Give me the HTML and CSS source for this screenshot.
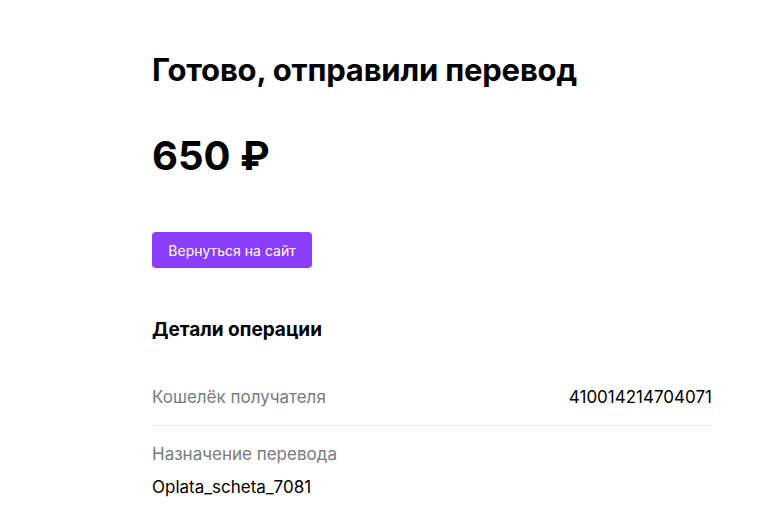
FILE: index.html
```html
<!DOCTYPE html>
<html lang="ru">
<head>
    <meta charset="UTF-8">
    <title>Перевод отправлен</title>
    <link rel="stylesheet" href="styles.css">
</head>
<body>

    <main class="page">
        <h1 class="title">Готово, отправили перевод</h1>

        <div class="amount">650 ₽</div>

        <button class="back-btn">Вернуться на сайт</button>

        <h2 class="details-title">Детали операции</h2>

        <div class="details">
            <div class="row row-inline">
                <span class="label">Кошелёк получателя</span>
                <span class="value">410014214704071</span>
            </div>
            <div class="row">
                <div class="label">Назначение перевода</div>
                <div class="value">Oplata_scheta_7081</div>
            </div>
        </div>
    </main>

</body>
</html>
```

FILE: styles.css
```css
body {
    margin: 0;
    background: #fff;
    color: #000;
    font-family: 'Inter', 'Noto Sans', sans-serif;
}

.page {
    width: 560px;
    margin-left: 152px;
    padding-top: 48px;
}

.title {
    margin: 0;
    font-size: 31px;
    font-weight: 700;
    line-height: 44px;
    letter-spacing: -0.2px;
}

.amount {
    margin-top: 40px;
    font-size: 40px;
    font-weight: 700;
    line-height: 48px;
}

.back-btn {
    display: block;
    margin-top: 52px;
    width: 160px;
    height: 36px;
    padding: 0;
    border: none;
    border-radius: 4px;
    background-color: #8b3ffd;
    color: #fff;
    font-family: inherit;
    font-size: 14px;
}

.details-title {
    margin: 50px 0 0;
    font-size: 19px;
    font-weight: 700;
    line-height: 24px;
}

.details {
    margin-top: 27px;
}

.row {
    padding: 16px 0;
    font-size: 17px;
    line-height: 24px;
}

.row-inline {
    display: flex;
    justify-content: space-between;
    border-bottom: 1px solid #ebebeb;
}

.label {
    color: #7a7a7a;
}

.row .value {
    margin-top: 9px;
}

.row-inline .value {
    margin-top: 0;
}
```
